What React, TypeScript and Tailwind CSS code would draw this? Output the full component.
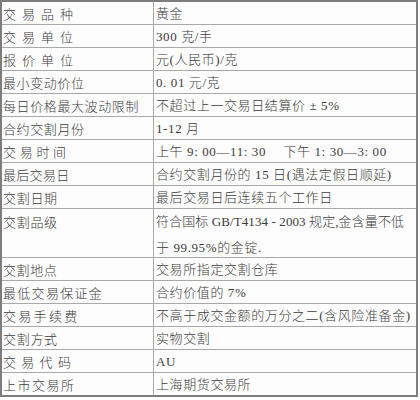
const rows = [
  { k: "交易品种", ks: "tracking-[6px]", v: "黄金" },
  { k: "交易单位", ks: "tracking-[6px]", v: "300 克/手" },
  { k: "报价单位", ks: "tracking-[6px]", v: "元(人民币)/克" },
  { k: "最小变动价位", ks: "tracking-[0.6px]", v: "0. 01 元/克" },
  { k: "每日价格最大波动限制", ks: "tracking-[0.6px]", v: "不超过上一交易日结算价 ± 5%" },
  { k: "合约交割月份", ks: "tracking-[0.6px]", v: "1-12 月" },
  { k: "交易时间", ks: "tracking-[3.7px]", v: "上午 9: 00—11: 30\u3000 下午 1: 30—3: 00" },
  { k: "最后交易日", ks: "tracking-[0.3px]", v: "合约交割月份的 15 日(遇法定假日顺延)" },
  { k: "交割日期", ks: "tracking-[0.7px]", v: "最后交易日后连续五个工作日" },
]

const rows2 = [
  { k: "交割地点", ks: "tracking-[0.6px]", v: "交易所指定交割仓库" },
  { k: "最低交易保证金", ks: "tracking-[1.3px]", v: "合约价值的 7%" },
  { k: "交易手续费", ks: "tracking-[2.3px]", v: "不高于成交金额的万分之二(含风险准备金)" },
  { k: "交割方式", ks: "tracking-[0.7px]", v: "实物交割" },
  { k: "交易代码", ks: "tracking-[5.3px]", v: "AU" },
  { k: "上市交易所", ks: "tracking-[1.5px]", v: "上海期货交易所" },
]

const cjk = "font-['Noto_Sans_CJK_SC',sans-serif] font-light"
const mixed = "font-['Liberation_Serif','Noto_Sans_CJK_SC',serif] font-light"

function Row({ k, ks, v, last }: { k: string; ks: string; v: string; last?: boolean }) {
  return (
    <div className={`flex ${last ? "h-[22px]" : "h-[23px] border-b border-[#a9a9a9]"}`}>
      <div className={`w-[152px] shrink-0 border-r border-[#a9a9a9] pl-[1px] flex items-center leading-none whitespace-nowrap text-[13px] ${cjk} ${ks}`}>
        {k}
      </div>
      <div className={`flex-1 pl-[2px] flex items-center leading-none whitespace-nowrap overflow-hidden text-[13px] tracking-[0.6px] ${mixed}`}>
        {v}
      </div>
    </div>
  )
}

export default function App() {
  return (
    <div className="w-[420px] h-[400px] bg-white text-[#3c3c3c]">
      <div className="w-[418px] border-2 border-[#7d7d7d] bg-[#fdfdfd]">
        {rows.map((r) => (
          <Row key={r.k} {...r} />
        ))}
        <div className="flex h-[49px] border-b border-[#a9a9a9]">
          <div className={`w-[152px] shrink-0 border-r border-[#a9a9a9] pl-[1px] leading-[26px] text-[13px] tracking-[0.7px] ${cjk}`}>
            交割品级
          </div>
          <div className={`flex-1 pl-[2px] leading-[26px] whitespace-nowrap overflow-hidden text-[13px] tracking-[0.1px] ${mixed}`}>
            <div>符合国标 GB/T4134 - 2003 规定,金含量不低</div>
            <div className="tracking-[0.6px]">于 99.95%的金锭.</div>
          </div>
        </div>
        {rows2.map((r, i) => (
          <Row key={r.k} {...r} last={i === rows2.length - 1} />
        ))}
      </div>
    </div>
  )
}
